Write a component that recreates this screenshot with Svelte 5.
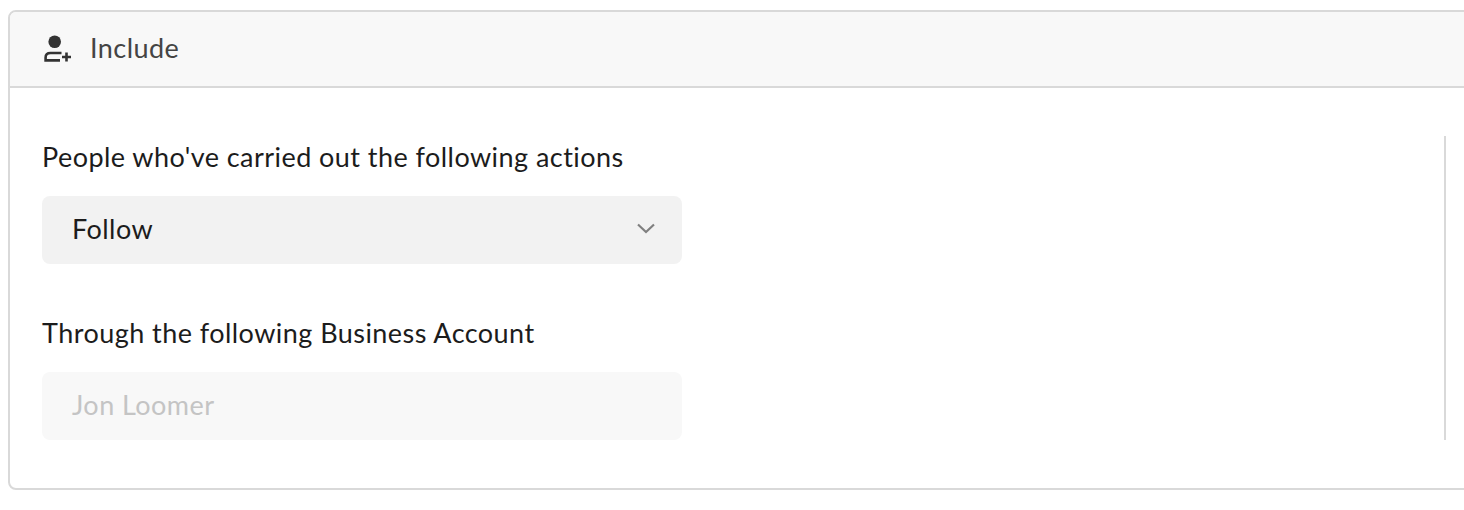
<script>
	const fields = [
		{ label: "People who've carried out the following actions", value: 'Follow', disabled: false },
		{ label: 'Through the following Business Account', value: 'Jon Loomer', disabled: true }
	];
</script>

<div class="page">
	<section class="card">
		<header class="card-header">
			<svg class="icon" width="28" height="28" viewBox="0 0 28 28" aria-hidden="true">
				<circle cx="10.7" cy="6.7" r="6.3" fill="#333" />
				<path d="M17.5 18H6.5C3.5 18 1.6 19.8 1.6 22.5V25.4H16" fill="none" stroke="#333" stroke-width="2.6" />
				<path d="M18 22H27M22.5 17.5V26.5" fill="none" stroke="#333" stroke-width="2.6" />
			</svg>
			<span class="title">Include</span>
		</header>
		<div class="card-body">
			<div class="fields">
				{#each fields as field}
					<div class="field">
						<div class="label">{field.label}</div>
						<div class="control" class:disabled={field.disabled}>
							<span class="value">{field.value}</span>
							<!-- chevron only on the editable select -->
							{#if !field.disabled}
								<svg class="chevron" width="20" height="12" viewBox="0 0 20 12" aria-hidden="true">
									<path d="M2 1.5L10 9L18 1.5" fill="none" stroke="#808080" stroke-width="2.2" />
								</svg>
							{/if}
						</div>
					</div>
				{/each}
			</div>
		</div>
	</section>
</div>

<style>
	:global(body) {
		margin: 0;
		background: #fff;
		overflow: hidden;
	}

	.page {
		width: 1464px;
		height: 510px;
		overflow: hidden;
		padding: 10px 0 0 8px;
		box-sizing: border-box;
		font-family: Lato, 'Liberation Sans', sans-serif;
		font-size: 27px;
		letter-spacing: 0.45px;
		color: #1c1c1c;
	}

	.card {
		width: 1500px;
		height: 480px;
		box-sizing: border-box;
		border: 2px solid #d9d9d9;
		border-radius: 8px;
		overflow: hidden;
	}

	.card-header {
		height: 76px;
		box-sizing: border-box;
		border-bottom: 2px solid #d9d9d9;
		background: #f8f8f8;
		display: flex;
		align-items: center;
		gap: 18px;
		padding-left: 34px;
	}

	.title {
		color: #444;
		margin-bottom: 4px;
	}

	.card-body {
		padding: 48px 32px;
	}

	.fields {
		width: 1402px;
		height: 304px;
		border-right: 2px solid #d9d9d9;
		display: flex;
		flex-direction: column;
		gap: 48px;
	}

	.field {
		width: 640px;
	}

	.label {
		line-height: 42px;
		margin-bottom: 18px;
	}

	.control {
		height: 68px;
		box-sizing: border-box;
		padding: 0 26px 0 30px;
		border-radius: 8px;
		background: #f2f2f2;
		display: flex;
		align-items: center;
		justify-content: space-between;
	}

	.value {
		margin-bottom: 4px;
	}

	.chevron {
		margin-bottom: 2px;
	}

	.control.disabled {
		background: #f8f8f8;
		color: #c4c4c4;
	}
</style>
